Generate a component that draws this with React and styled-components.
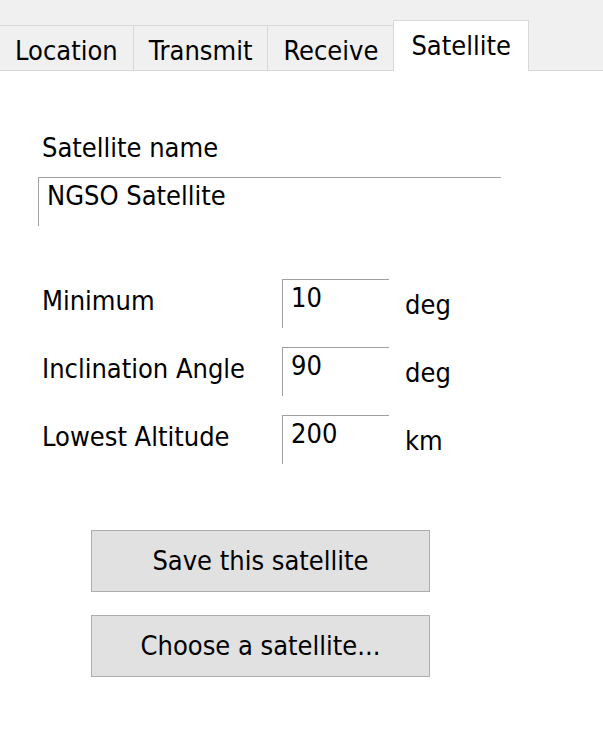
import React from 'react';
import styled, { createGlobalStyle } from 'styled-components';

const GlobalStyle = createGlobalStyle`
    html, body {
        margin: 0;
        padding: 0;
        background-color: #ffffff;
    }
    body {
        font-family: "DejaVu Sans Condensed", "DejaVu Sans", sans-serif;
        font-stretch: condensed;
        font-size: 27px;
        line-height: 32px;
        color: #000000;
    }
`;

const Window = styled.div`
    width: 603px;
    height: 749px;
    background-color: #ffffff;
    overflow: hidden;
`;

const TabBar = styled.div`
    display: flex;
    align-items: flex-end;
    height: 71px;
    box-sizing: border-box;
    background-color: #f0f0f0;
    border-bottom: 1px solid #d9d9d9;
`;

const Tab = styled.div`
    box-sizing: border-box;
    height: ${p => (p.$active ? '51px' : '45px')};
    margin-bottom: ${p => (p.$active ? '-1px' : '0')};
    margin-left: ${p => (p.$active ? '-1px' : '0')};
    padding: 9px ${p => (p.$active ? '17px' : '15px')} 0;
    background-color: ${p => (p.$active ? '#ffffff' : '#f0f0f0')};
    border-top: 1px solid #d9d9d9;
    border-right: 1px solid #d9d9d9;
    border-left: ${p => (p.$active ? '1px solid #d9d9d9' : 'none')};
    white-space: nowrap;
`;

const Panel = styled.div`
    padding: 61px 0 0 42px;
`;

const Label = styled.div`
    padding-top: ${p => p.$top || 0}px;
    white-space: nowrap;
`;

const Field = styled.input`
    display: block;
    box-sizing: border-box;
    width: ${p => p.$width}px;
    height: 49px;
    margin: 0;
    padding: 1px 0 15px 8px;
    border: none;
    border-top: 1px solid #a0a0a0;
    border-left: 1px solid #a0a0a0;
    background: #ffffff;
    font: inherit;
    line-height: 32px;
    color: #000000;
    outline: none;
`;

const NameField = styled(Field)`
    margin: 13px 0 0 -4px;
`;

const Rows = styled.div`
    display: grid;
    grid-template-columns: 240px 107px auto;
    grid-auto-rows: 49px;
    row-gap: 19px;
    margin-top: 53px;
`;

const Unit = styled.div`
    padding: 10px 0 0 16px;
`;

const Buttons = styled.div`
    display: flex;
    flex-direction: column;
    gap: 23px;
    margin: 66px 0 0 49px;
`;

const Button = styled.button`
    box-sizing: border-box;
    width: 339px;
    height: 62px;
    margin: 0;
    padding: 0;
    background-color: #e1e1e1;
    border: 1px solid #adadad;
    border-radius: 0;
    font: inherit;
    color: #000000;
`;

const tabs = ['Location', 'Transmit', 'Receive', 'Satellite'];

const params = [
    { label: 'Minimum', value: '10', unit: 'deg' },
    { label: 'Inclination Angle', value: '90', unit: 'deg' },
    { label: 'Lowest Altitude', value: '200', unit: 'km' },
];

export default function App() {
    return (
        <Window>
            <GlobalStyle />
            <TabBar>
                {tabs.map(t => (
                    <Tab key={t} $active={t === 'Satellite'}>{t}</Tab>
                ))}
            </TabBar>
            <Panel>
                <Label>Satellite name</Label>
                <NameField $width={463} defaultValue="NGSO Satellite" />
                <Rows>
                    {params.map(p => (
                        <React.Fragment key={p.label}>
                            <Label $top={6}>{p.label}</Label>
                            <Field $width={107} defaultValue={p.value} />
                            <Unit>{p.unit}</Unit>
                        </React.Fragment>
                    ))}
                </Rows>
                <Buttons>
                    <Button>Save this satellite</Button>
                    <Button>Choose a satellite...</Button>
                </Buttons>
            </Panel>
        </Window>
    );
}
